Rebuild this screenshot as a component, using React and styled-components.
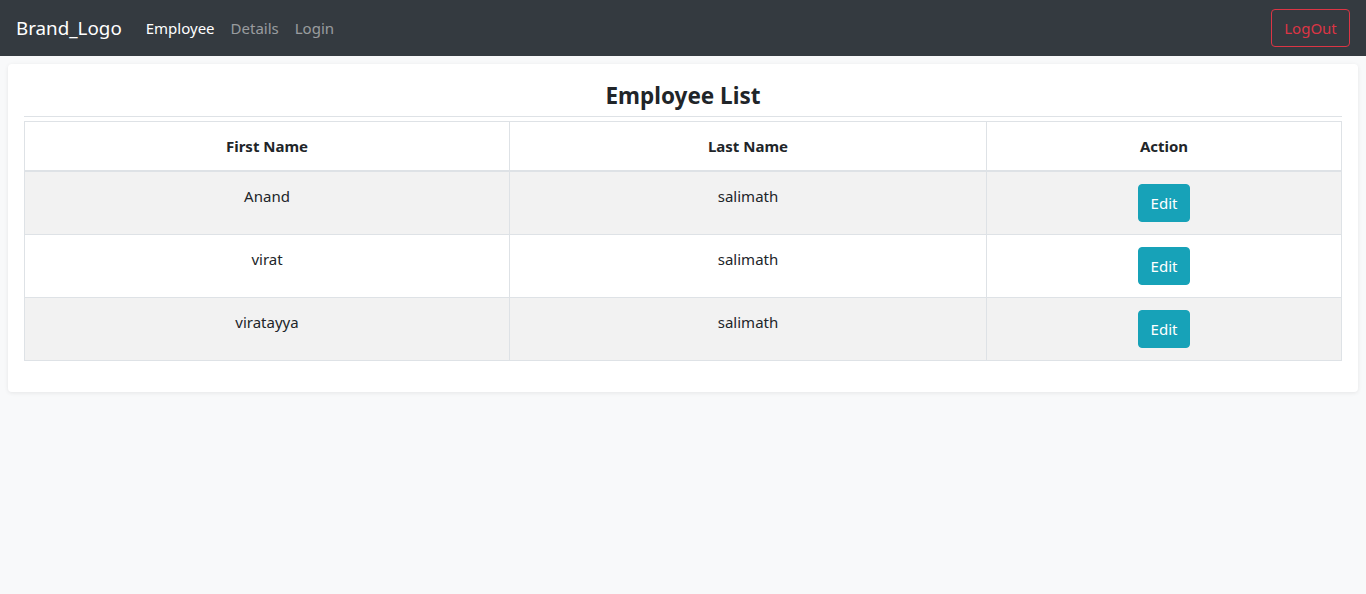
import styled, { createGlobalStyle } from "styled-components";

const GlobalStyle = createGlobalStyle`
    * { box-sizing: border-box; }
    body {
        margin: 0;
        background: #f8f9fa;
        font-family: "Noto Sans", "Open Sans", sans-serif;
        color: #212529;
        font-size: 15px;
    }
`;

const employees = [
    { id: 1, firstName: 'Anand', lastName: 'salimath' },
    { id: 2, firstName: 'virat', lastName: 'salimath' },
    { id: 3, firstName: 'viratayya', lastName: 'salimath' },
];

export default function App() {
    return (
        <>
            <GlobalStyle />
            <Navbar>
                <Brand>Brand_Logo</Brand>
                <NavLinks>
                    <NavLink active>Employee</NavLink>
                    <NavLink>Details</NavLink>
                    <NavLink>Login</NavLink>
                </NavLinks>
                <LogoutButton>LogOut</LogoutButton>
            </Navbar>
            <Page>
                <Card>
                    <Title>Employee List</Title>
                    <Divider />
                    <Table>
                        <thead>
                            <tr>
                                <Th style={{ width: 485 }}>First Name</Th>
                                <Th style={{ width: 477 }}>Last Name</Th>
                                <Th>Action</Th>
                            </tr>
                        </thead>
                        <tbody>
                            {employees.map((emp, i) => (
                                <Row key={emp.id} striped={i % 2 === 0}>
                                    <Td>{emp.firstName}</Td>
                                    <Td>{emp.lastName}</Td>
                                    <Td><EditButton>Edit</EditButton></Td>
                                </Row>
                            ))}
                        </tbody>
                    </Table>
                </Card>
            </Page>
        </>
    );
}

const Navbar = styled.nav`
    height: 56px;
    background: #343a40;
    display: flex;
    align-items: center;
    padding: 0 16px;
`;

const Brand = styled.div`
    color: #fff;
    font-size: 18.8px;
    margin-right: 16px;
    line-height: 30px;
`;

const NavLinks = styled.div`
    display: flex;
    flex: 1;
`;

const NavLink = styled.a`
    color: ${props => props.active ? '#ffffff' : 'rgba(255,255,255,.5)'};
    padding: 8px;
    font-size: 15px;
    cursor: pointer;
`;

const LogoutButton = styled.button`
    background: none;
    border: 1px solid #dc3545;
    color: #dc3545;
    border-radius: 4px;
    height: 38px;
    width: 79px;
    padding: 0;
    font-family: inherit;
    font-size: 15px;
    cursor: pointer;
`;

const Page = styled.main`
    padding: 8px;
`;

const Card = styled.section`
    background: #fff;
    border-radius: 4px;
    box-shadow: 0 1px 4px rgba(0,0,0,.08);
    padding: 16px 16px 31px;
`;

const Title = styled.h3`
    margin: 0;
    text-align: center;
    font-size: 22.5px;
    font-weight: 700;
    line-height: 32px;
`;

const Divider = styled.hr`
    margin: 4px 0 4px;
    border: none;
    border-top: 1px solid #dee2e6;
`;

const Table = styled.table`
    width: 100%;
    border-collapse: collapse;
    border: 1px solid #dee2e6;
    text-align: center;
`;

const Th = styled.th`
    border: 1px solid #dee2e6;
    border-bottom-width: 2px;
    padding: 12px;
    font-size: 15px;
    line-height: 24px;
    font-weight: 700;
`;

const Row = styled.tr`
    background: ${props => props.striped ? '#f2f2f2' : '#ffffff'};
`;

const Td = styled.td`
    border: 1px solid #dee2e6;
    padding: 12px;
    line-height: 24px;
    vertical-align: top;
`;

const EditButton = styled.button`
    background: #17a2b8;
    border: 1px solid #17a2b8;
    color: #fff;
    border-radius: 4px;
    height: 38px;
    width: 52px;
    padding: 0;
    font-family: inherit;
    font-size: 15px;
    cursor: pointer;
`;
